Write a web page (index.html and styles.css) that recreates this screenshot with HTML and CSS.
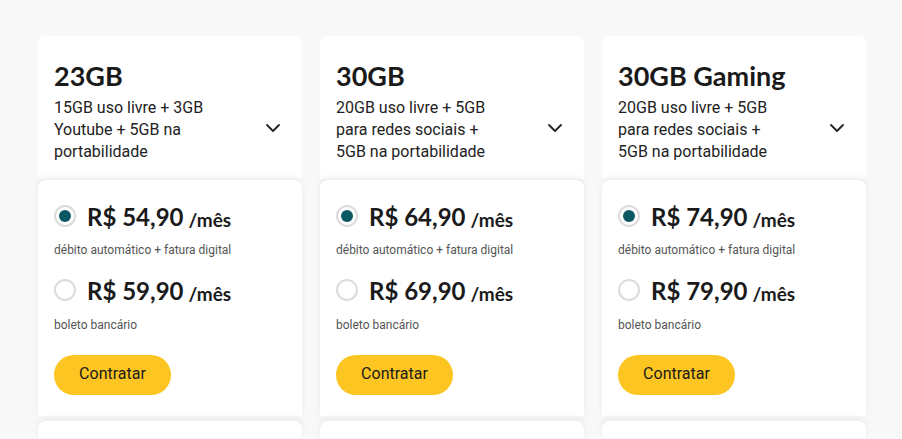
FILE: index.html
```html
<!DOCTYPE html>
<html lang="pt-BR">
<head>
<meta charset="utf-8">
<link rel="stylesheet" href="styles.css">
</head>
<body>
<div class="plans">
  <div class="card">
    <div class="head">
      <div class="title">23GB</div>
      <div class="desc-row">
        <div class="desc">15GB uso livre + 3GB Youtube + 5GB na portabilidade</div>
        <svg class="chev" width="16" height="10" viewBox="0 0 16 10"><path d="M2 2 L8 8 L14 2" fill="none" stroke="#222" stroke-width="1.8" stroke-linecap="round" stroke-linejoin="round"/></svg>
      </div>
    </div>
    <div class="prices">
      <div class="opt"><span class="radio on"></span><span class="price">R$ 54,90</span><span class="per">/mês</span></div>
      <div class="note">débito automático + fatura digital</div>
      <div class="opt second"><span class="radio"></span><span class="price">R$ 59,90</span><span class="per">/mês</span></div>
      <div class="note">boleto bancário</div>
      <button class="btn">Contratar</button>
    </div>
    <div class="more"></div>
  </div>
  <div class="card">
    <div class="head">
      <div class="title">30GB</div>
      <div class="desc-row">
        <div class="desc">20GB uso livre + 5GB para redes sociais + 5GB na portabilidade</div>
        <svg class="chev" width="16" height="10" viewBox="0 0 16 10"><path d="M2 2 L8 8 L14 2" fill="none" stroke="#222" stroke-width="1.8" stroke-linecap="round" stroke-linejoin="round"/></svg>
      </div>
    </div>
    <div class="prices">
      <div class="opt"><span class="radio on"></span><span class="price">R$ 64,90</span><span class="per">/mês</span></div>
      <div class="note">débito automático + fatura digital</div>
      <div class="opt second"><span class="radio"></span><span class="price">R$ 69,90</span><span class="per">/mês</span></div>
      <div class="note">boleto bancário</div>
      <button class="btn">Contratar</button>
    </div>
    <div class="more"></div>
  </div>
  <div class="card">
    <div class="head">
      <div class="title">30GB Gaming</div>
      <div class="desc-row">
        <div class="desc">20GB uso livre + 5GB para redes sociais + 5GB na portabilidade</div>
        <svg class="chev" width="16" height="10" viewBox="0 0 16 10"><path d="M2 2 L8 8 L14 2" fill="none" stroke="#222" stroke-width="1.8" stroke-linecap="round" stroke-linejoin="round"/></svg>
      </div>
    </div>
    <div class="prices">
      <div class="opt"><span class="radio on"></span><span class="price">R$ 74,90</span><span class="per">/mês</span></div>
      <div class="note">débito automático + fatura digital</div>
      <div class="opt second"><span class="radio"></span><span class="price">R$ 79,90</span><span class="per">/mês</span></div>
      <div class="note">boleto bancário</div>
      <button class="btn">Contratar</button>
    </div>
    <div class="more"></div>
  </div>
</div>
</body>
</html>
```
FILE: styles.css
```css
html, body {
  margin: 0;
  padding: 0;
  background: #f8f8f8;
  height: 100%;
  overflow: hidden;
}
body {
  font-family: Roboto, "Liberation Sans", sans-serif;
  color: #1a1a1a;
}
.plans {
  display: flex;
  gap: 18px;
  padding: 36px 0 0 38px;
}
.card {
  width: 264px;
  display: flex;
  flex-direction: column;
}
.head {
  background: #fff;
  border-radius: 8px 8px 0 0;
  padding: 24px 16px 16px 16px;
}
.title {
  font-family: Lato, sans-serif;
  font-weight: 700;
  font-size: 27px;
  line-height: 32px;
}
.desc-row {
  display: flex;
  align-items: center;
  justify-content: space-between;
  margin-top: 5px;
}
.desc {
  width: 172px;
  font-size: 16px;
  line-height: 22px;
  color: #222;
}
.chev {
  margin-right: 5px;
  margin-top: -4px;
}
.prices {
  background: #fff;
  border-radius: 8px 8px 0 0;
  margin-top: 1px;
  padding: 24px 16px 21px 16px;
  box-shadow: 0 -3px 6px rgba(0,0,0,0.06);
}
.opt {
  display: flex;
  align-items: center;
  height: 24px;
}
.opt.second {
  margin-top: 20px;
}
.radio {
  width: 18px;
  height: 18px;
  border: 2px solid #dcdcdc;
  border-radius: 50%;
  box-sizing: content-box;
  position: relative;
  margin-right: 11px;
  flex: none;
}
.radio.on::after {
  content: "";
  position: absolute;
  left: 3px;
  top: 3px;
  width: 12px;
  height: 12px;
  border-radius: 50%;
  background: #0b5865;
}
.price {
  font-family: Lato, sans-serif;
  font-weight: 700;
  font-size: 24px;
}
.per {
  font-family: Lato, sans-serif;
  font-weight: 700;
  font-size: 19px;
  margin-left: 5px;
  margin-top: 6px;
}
.note {
  font-size: 12px;
  line-height: 16px;
  color: #555;
  margin-top: 14px;
}
.opt.second + .note {
  margin-top: 15px;
}
.btn {
  display: block;
  margin-top: 22px;
  width: 117px;
  height: 40px;
  border: none;
  border-radius: 20px;
  background: #fcc521;
  font-family: Roboto, sans-serif;
  font-size: 16px;
  color: #1a1a1a;
  padding: 0 0 3px 0;
}
.more {
  background: #fff;
  border-radius: 8px 8px 0 0;
  margin-top: 5px;
  height: 17px;
  box-shadow: 0 -3px 6px rgba(0,0,0,0.06);
}
```
